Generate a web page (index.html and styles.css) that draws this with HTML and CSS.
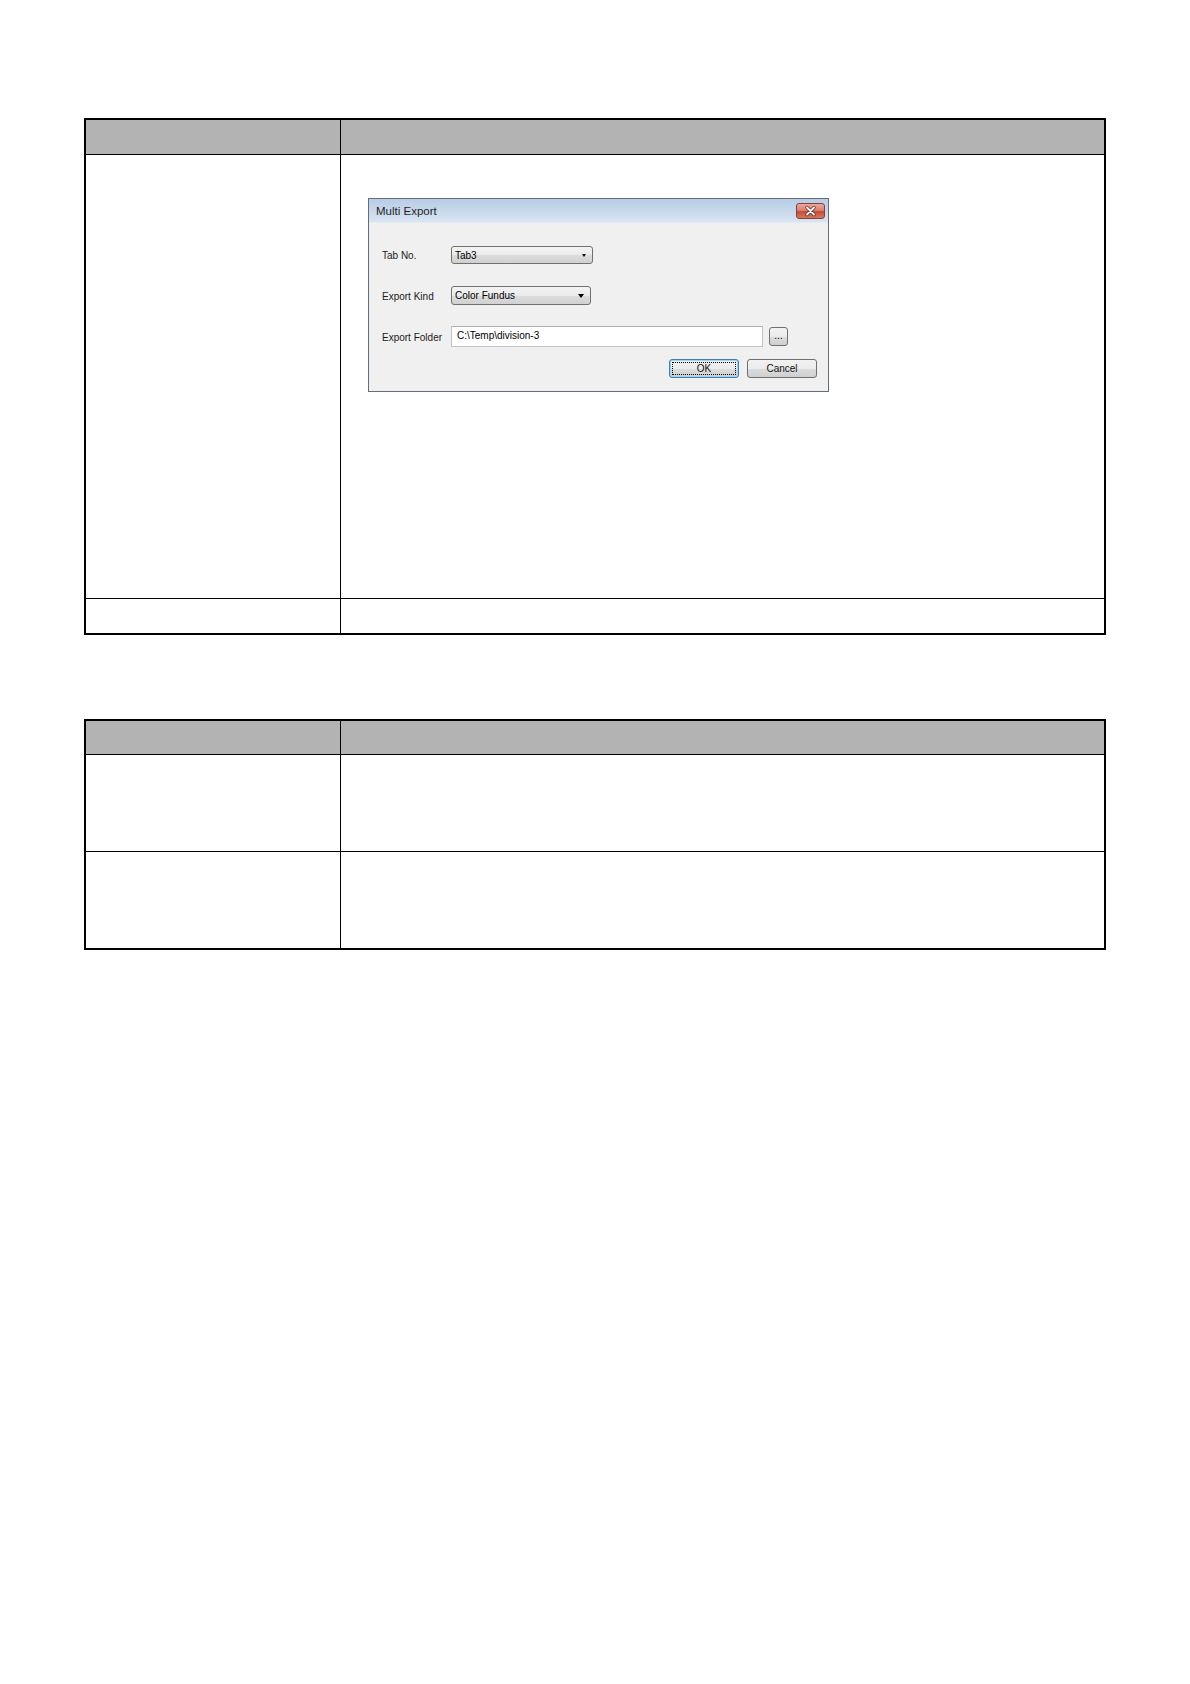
FILE: index.html
```html
<!DOCTYPE html>
<html>
<head>
<meta charset="utf-8">
<title>Multi Export</title>
<link rel="stylesheet" href="styles.css">
</head>
<body>
<div class="page">
  <div class="tbl t1">
    <div class="row head"><div class="c1"></div><div class="c2"></div></div>
    <div class="row main">
      <div class="c1"></div>
      <div class="c2">
        <div class="dlg">
          <div class="titlebar">
            <span class="title">Multi Export</span>
            <span class="close">
              <svg width="27" height="14" viewBox="0 0 27 14">
                <path d="M10 3.5 L17 10.5 M17 3.5 L10 10.5" stroke="#6b2a22" stroke-width="3.4" stroke-linecap="round" fill="none"/>
                <path d="M10 3.5 L17 10.5 M17 3.5 L10 10.5" stroke="#ffffff" stroke-width="1.8" stroke-linecap="round" fill="none"/>
              </svg>
            </span>
          </div>
          <div class="dbody">
            <div class="frow r1">
              <span class="lbl">Tab No.</span>
              <div class="combo combo-tab"><span>Tab3</span><i class="arrow arrow-sm"></i></div>
            </div>
            <div class="frow r2">
              <span class="lbl">Export Kind</span>
              <div class="combo combo-kind"><span>Color Fundus</span><i class="arrow"></i></div>
            </div>
            <div class="frow r3">
              <span class="lbl">Export Folder</span>
              <div class="field">C:\Temp\division-3</div>
              <div class="btn dots">...</div>
            </div>
            <div class="btnrow">
              <div class="btn ok">OK</div>
              <div class="btn cancel">Cancel</div>
            </div>
          </div>
        </div>
      </div>
    </div>
    <div class="row foot"><div class="c1"></div><div class="c2"></div></div>
  </div>

  <div class="tbl t2">
    <div class="row head"><div class="c1"></div><div class="c2"></div></div>
    <div class="row mid"><div class="c1"></div><div class="c2"></div></div>
    <div class="row mid"><div class="c1"></div><div class="c2"></div></div>
  </div>
</div>
</body>
</html>
```

FILE: styles.css
```css
html, body {
  margin: 0;
  padding: 0;
  background: #ffffff;
}
body {
  font-family: "Liberation Sans", Arial, sans-serif;
  color: #000;
}
.page {
  padding: 118px 0 0 84px;
}
.tbl {
  width: 1022px;
  box-sizing: border-box;
  border: 2px solid #000;
}
.t2 {
  margin-top: 84px;
}
.row {
  display: grid;
  grid-template-columns: 255px 1fr;
  box-sizing: border-box;
  border-top: 1px solid #000;
}
.row:first-child {
  border-top: 0;
}
.c1 {
  border-right: 1px solid #000;
}
.head {
  background: #b3b3b3;
}
.t1 .head { height: 34px; }
.t1 .main { height: 444px; }
.t1 .foot { height: 35px; }
.t2 .head { height: 33px; }
.t2 .mid { height: 97px; }

/* dialog */
.dlg {
  margin: 43px 0 0 27px;
  width: 461px;
  height: 194px;
  box-sizing: border-box;
  border: 1px solid #646e7a;
  background: #f0f0f0;
  display: flex;
  flex-direction: column;
}
.titlebar {
  height: 24px;
  flex: none;
  display: flex;
  align-items: center;
  justify-content: space-between;
  padding: 0 3px 0 7px;
  background: linear-gradient(#b8cce6, #c9d9ec 55%, #d9e5f2);
  border-bottom: 1px solid #e3ebf5;
  box-sizing: border-box;
}
.title {
  font-size: 11.5px;
  color: #1e1e1e;
}
.close {
  width: 29px;
  height: 16px;
  box-sizing: border-box;
  border: 1px solid #86403a;
  border-radius: 3px;
  background: linear-gradient(#eaa99c, #d98272 45%, #c64a35 55%, #d37a62);
  display: flex;
  align-items: center;
  justify-content: center;
}
.close svg { display: block; }
.dbody {
  padding: 23px 11px 0 13px;
  display: flex;
  flex-direction: column;
}
.frow {
  display: flex;
  align-items: center;
}
.r2 { margin-top: 22px; }
.r3 { margin-top: 21px; }
.lbl {
  width: 69px;
  flex: none;
  font-size: 10px;
  color: #1a1a1a;
  padding-top: 1px;
}
.combo {
  box-sizing: border-box;
  border: 1px solid #707070;
  border-radius: 3px;
  background: linear-gradient(#f3f3f3, #ebebeb 50%, #dddddd 51%, #d0d0d0);
  display: flex;
  align-items: center;
  padding: 0 6px 0 3px;
  font-size: 10px;
}
.combo-tab { width: 142px; height: 18px; }
.combo-kind { width: 140px; height: 19px; }
.combo span { flex: 1; }
.arrow {
  display: block;
  flex: none;
  width: 0;
  height: 0;
  border-left: 3.5px solid transparent;
  border-right: 3.5px solid transparent;
  border-top: 4px solid #000;
}
.arrow-sm {
  border-left-width: 2.5px;
  border-right-width: 2.5px;
  border-top-width: 3px;
}
.field {
  width: 312px;
  height: 21px;
  box-sizing: border-box;
  border: 1px solid #c2c4c9;
  border-top-color: #abadb3;
  background: #fff;
  font-size: 10px;
  padding: 0 0 2px 5px;
  display: flex;
  align-items: center;
}
.btn {
  box-sizing: border-box;
  border: 1px solid #707070;
  border-radius: 3px;
  background: linear-gradient(#f2f2f2, #ebebeb 50%, #dddddd 51%, #cfcfcf);
  font-size: 10px;
  display: flex;
  align-items: center;
  justify-content: center;
  color: #111;
}
.dots {
  width: 19px;
  height: 19px;
  margin-left: 6px;
  padding-bottom: 2px;
}
.btnrow {
  margin-top: 12px;
  display: flex;
  justify-content: flex-end;
  gap: 8px;
}
.ok, .cancel {
  width: 70px;
  height: 19px;
}
.ok {
  border-color: #3c7fb1;
  box-shadow: inset 0 0 0 1px #9fd3ee;
  outline: 1px dotted #000;
  outline-offset: -4px;
}
```
